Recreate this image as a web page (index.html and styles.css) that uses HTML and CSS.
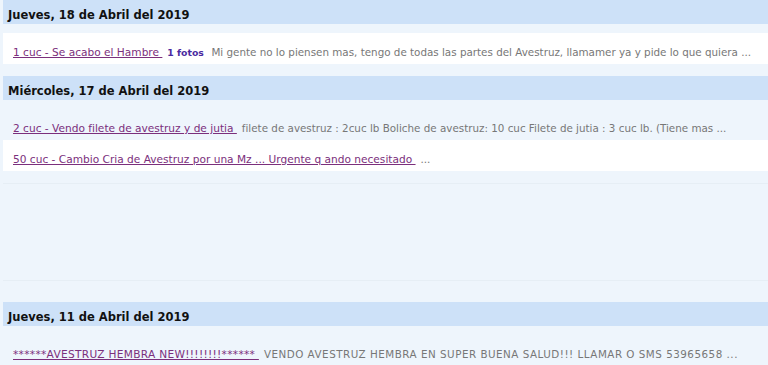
FILE: index.html
```html
<!DOCTYPE html>
<html lang="es">
<head>
    <meta charset="UTF-8">
    <meta name="viewport" content="width=device-width, initial-scale=1.0">
    <title>Anuncios - Avestruz</title>
    <link rel="stylesheet" href="styles.css">
</head>
<body>
    <div class="listado">
        <section class="dia">
            <h2 class="dia-titulo">Jueves, 18 de Abril del 2019</h2>
            <div class="anuncio">
                <a href="#" class="anuncio-link">1 cuc - Se acabo el Hambre </a>
                <span class="fotos">1 fotos</span>
                <span class="resumen">Mi gente no lo piensen mas, tengo de todas las partes del Avestruz, llamamer ya y pide lo que quiera ...</span>
            </div>
        </section>

        <section class="dia">
            <h2 class="dia-titulo">Miércoles, 17 de Abril del 2019</h2>
            <div class="anuncio par">
                <a href="#" class="anuncio-link">2 cuc - Vendo filete de avestruz y de jutia </a>
                <span class="resumen">filete de avestruz : 2cuc lb Boliche de avestruz: 10 cuc Filete de jutia : 3 cuc lb. (Tiene mas ...</span>
            </div>
            <div class="anuncio">
                <a href="#" class="anuncio-link">50 cuc - Cambio Cria de Avestruz por una Mz ... Urgente q ando necesitado </a>
                <span class="resumen">...</span>
            </div>
        </section>

        <div class="publicidad"></div>

        <section class="dia">
            <h2 class="dia-titulo">Jueves, 11 de Abril del 2019</h2>
            <div class="anuncio par">
                <a href="#" class="anuncio-link mayus">******AVESTRUZ HEMBRA NEW!!!!!!!!****** </a>
                <span class="resumen mayus">VENDO AVESTRUZ HEMBRA EN SUPER BUENA SALUD!!! LLAMAR O SMS 53965658 ...</span>
            </div>
        </section>
    </div>
</body>
</html>
```

FILE: styles.css
```css
body {
    margin: 0;
    padding: 0;
    background-color: #eef5fc;
    font-family: "DejaVu Sans", Verdana, sans-serif;
    font-size: 11px;
    color: #333;
}

.listado {
    padding-left: 3px;
}

.dia {
    margin-bottom: 12px;
}

.dia-titulo {
    margin: 0 0 9px 0;
    height: 24px;
    line-height: 31px;
    padding-left: 5px;
    background-color: #cde1f8;
    color: #111;
    font-size: 11.5px;
    font-weight: bold;
    overflow: hidden;
}

.anuncio {
    height: 26px;
    line-height: 28px;
    padding: 5px 0 0 10px;
    background-color: #fff;
    white-space: nowrap;
    overflow: hidden;
}

.anuncio.par {
    background-color: #eef5fc;
}

.anuncio-link {
    color: #7b2f7c;
    font-size: 10.6px;
    text-decoration: underline;
    margin-right: 5px;
}

.fotos {
    color: #4a2aa0;
    font-weight: bold;
    font-size: 9.3px;
    margin-right: 4px;
}

.resumen {
    color: #777;
    font-size: 10.35px;
}

.anuncio-link.mayus {
    letter-spacing: 0.3px;
}

.resumen.mayus {
    letter-spacing: 0.5px;
}

.publicidad {
    height: 96px;
    margin-bottom: 21px;
    border-top: 1px solid #e6eef5;
    border-bottom: 1px solid #e6eef5;
}
```
